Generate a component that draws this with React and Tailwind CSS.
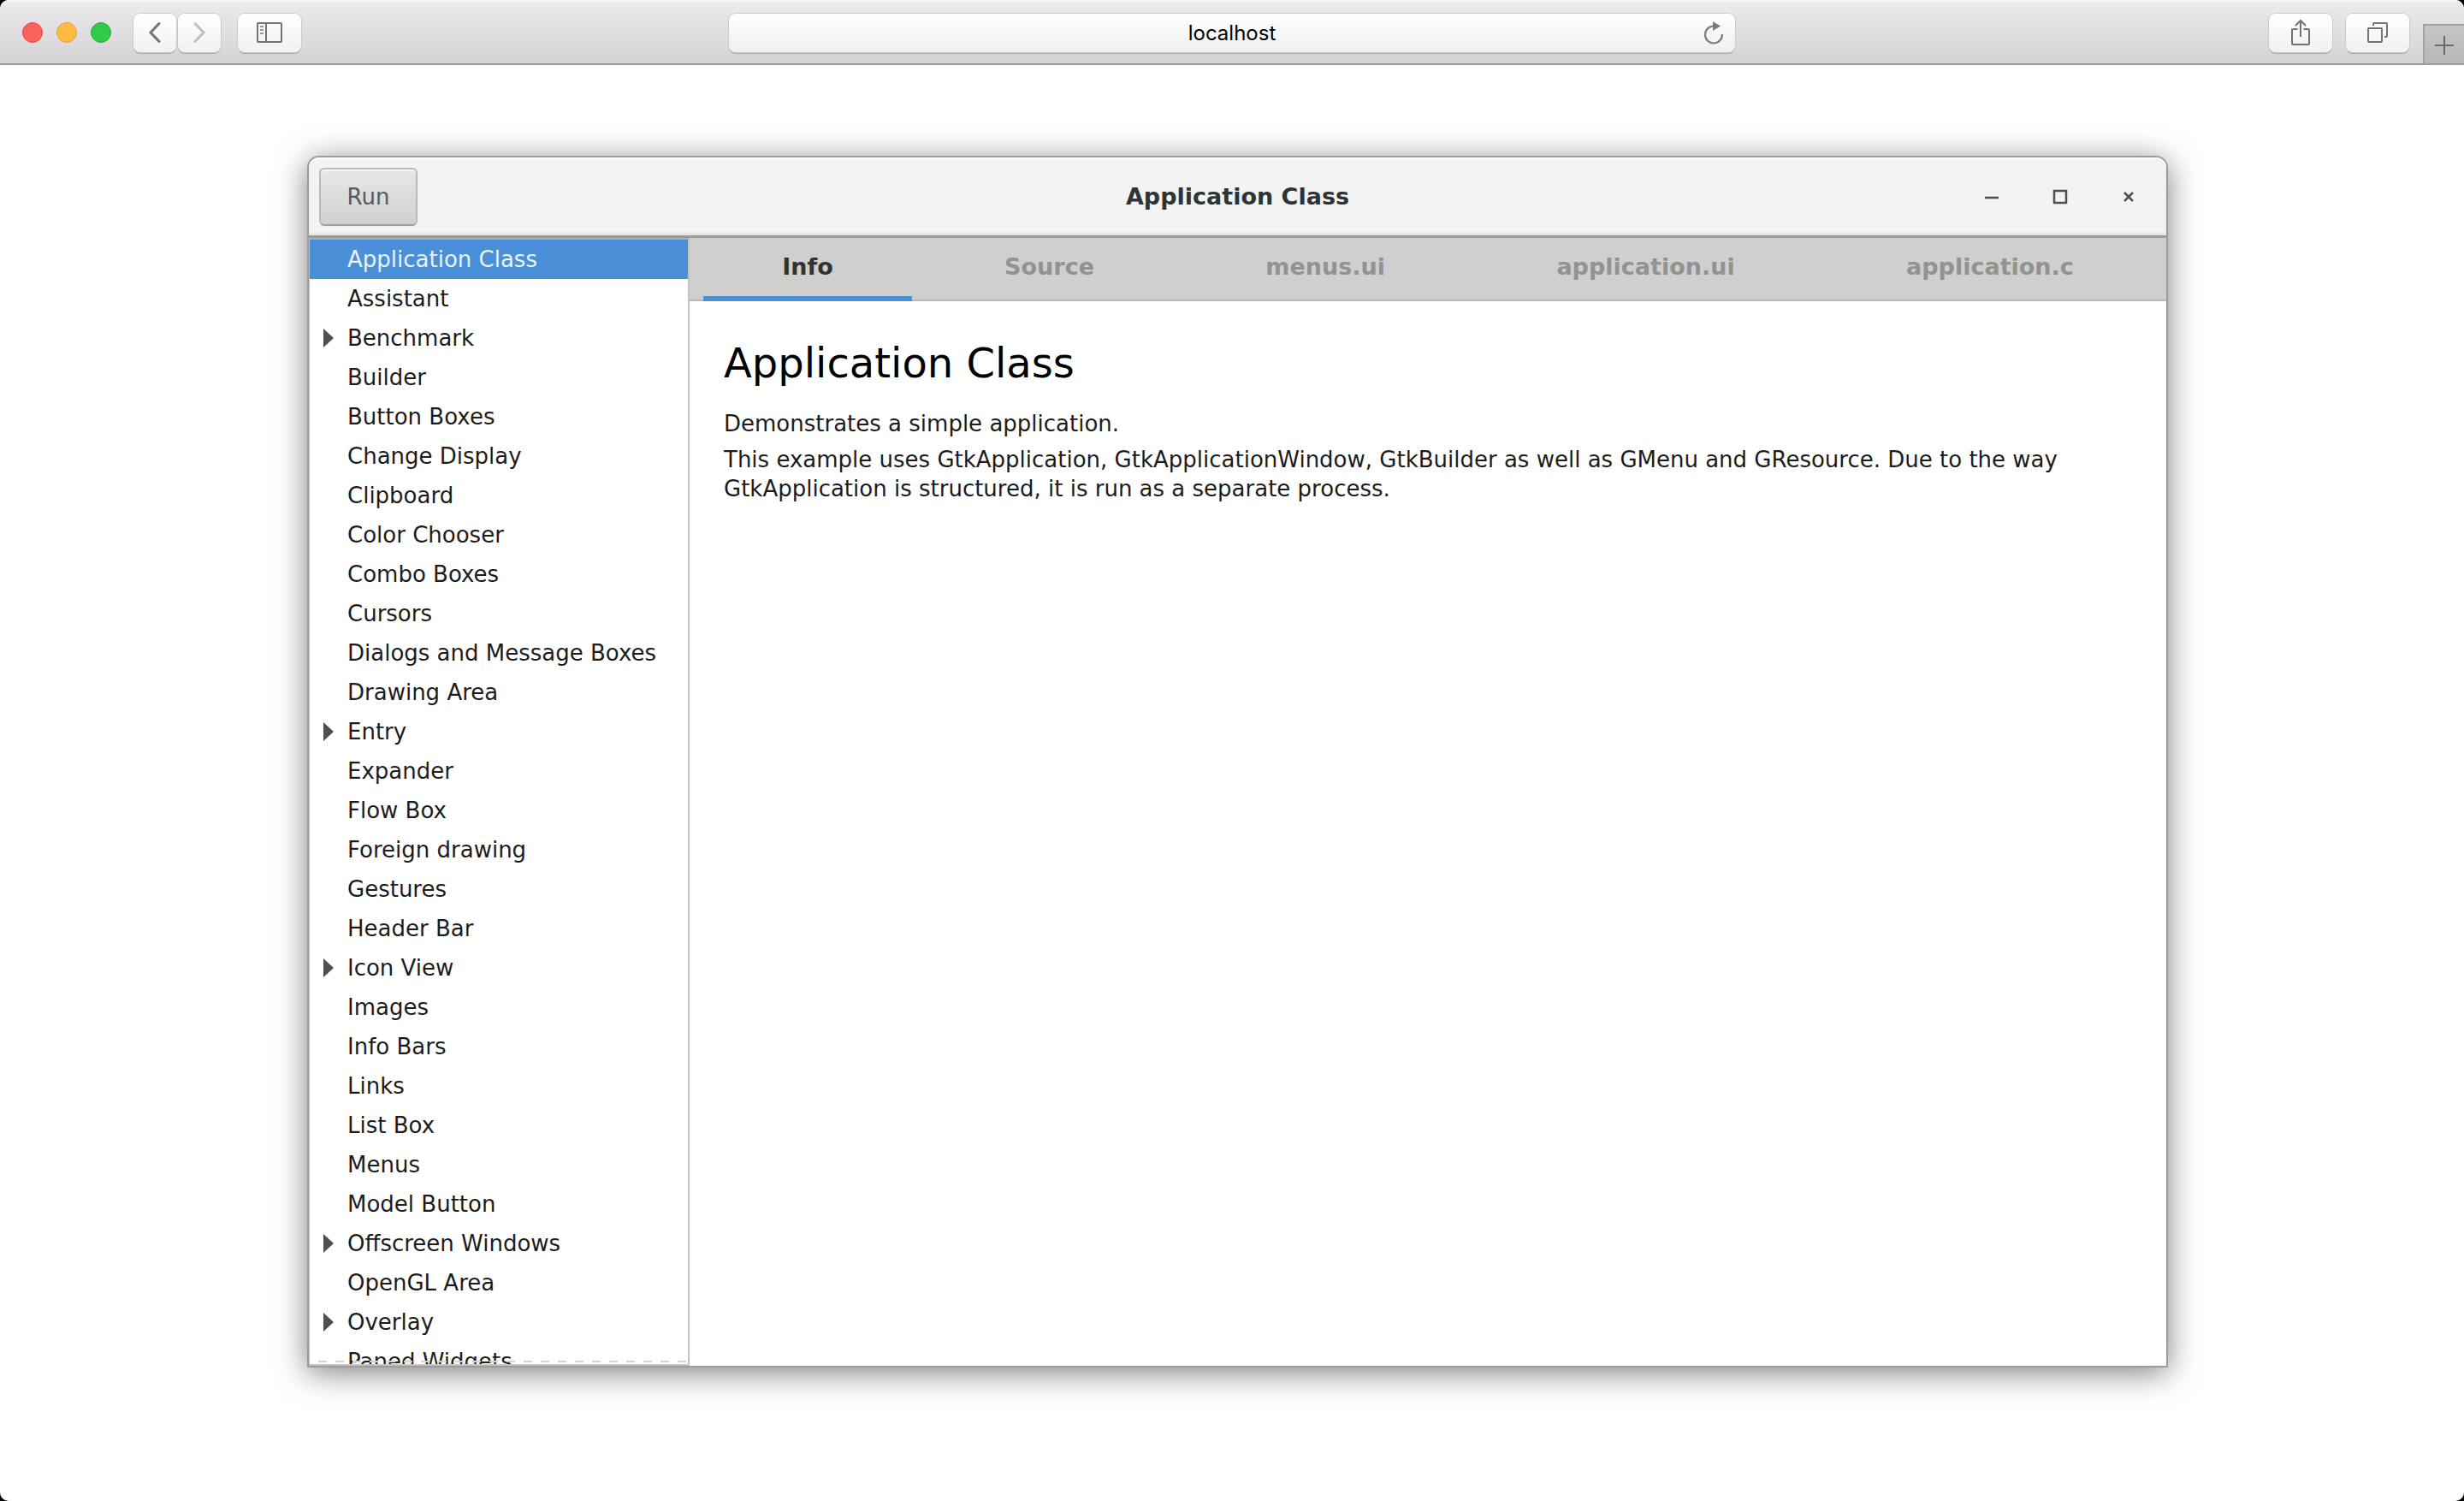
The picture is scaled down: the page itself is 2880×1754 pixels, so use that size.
import React, { useState } from "react";

const demos = [
  { name: "Application Class" },
  { name: "Assistant" },
  { name: "Benchmark", nested: true },
  { name: "Builder" },
  { name: "Button Boxes" },
  { name: "Change Display" },
  { name: "Clipboard" },
  { name: "Color Chooser" },
  { name: "Combo Boxes" },
  { name: "Cursors" },
  { name: "Dialogs and Message Boxes" },
  { name: "Drawing Area" },
  { name: "Entry", nested: true },
  { name: "Expander" },
  { name: "Flow Box" },
  { name: "Foreign drawing" },
  { name: "Gestures" },
  { name: "Header Bar" },
  { name: "Icon View", nested: true },
  { name: "Images" },
  { name: "Info Bars" },
  { name: "Links" },
  { name: "List Box" },
  { name: "Menus" },
  { name: "Model Button" },
  { name: "Offscreen Windows", nested: true },
  { name: "OpenGL Area" },
  { name: "Overlay", nested: true },
  { name: "Paned Widgets" },
];

const tabs = ["Info", "Source", "menus.ui", "application.ui", "application.c"];

const chromeButton =
  "flex h-[45px] items-center justify-center rounded-lg bg-linear-to-b from-white to-[#f1f1f1] text-[#737373] shadow-[0_0_0_1px_#cbc9cc,0_2px_0_0_#a9a8aa]";

function BrowserBar() {
  return (
    <header className="grid h-[76px] shrink-0 grid-cols-[1fr_41%_1fr] rounded-t-[10px] border-b-2 border-[#9d9b9e] bg-linear-to-b from-[#eeebef] to-[#d4d2d5] pt-[2px] shadow-[inset_0_2px_0_#f7f5f8]">
      <div className="flex items-center pl-[26px]">
        <div className="flex gap-4">
          <button aria-label="Close browser" className="size-6 rounded-full border border-[#e2443f] bg-[#fc615d]" />
          <button aria-label="Minimize browser" className="size-6 rounded-full border border-[#dfa033] bg-[#fdbc40]" />
          <button aria-label="Zoom browser" className="size-6 rounded-full border border-[#27aa35] bg-[#34ca49]" />
        </div>
        <div className="ml-[26px] flex gap-[2px]">
          <button aria-label="Back" className={`${chromeButton} w-[50px]`}>
            <svg width="16" height="26" viewBox="0 0 16 26" fill="none" stroke="#737373" strokeWidth="3" strokeLinecap="round">
              <path d="M13 2.500L3 13l10 10.500" />
            </svg>
          </button>
          <button aria-label="Forward" className={`${chromeButton} w-[50px]`}>
            <svg width="16" height="26" viewBox="0 0 16 26" fill="none" stroke="#bfbfbf" strokeWidth="3" strokeLinecap="round">
              <path d="M3 2.500L13 13L3 23.500" />
            </svg>
          </button>
        </div>
        <button aria-label="Show sidebar" className={`${chromeButton} ml-5 w-[74px]`}>
          <svg width="30" height="24" viewBox="0 0 30 24" fill="none" stroke="currentColor" strokeWidth="2">
            <rect x="1" y="1" width="28" height="22" rx="1" />
            <path d="M11 1v22" />
            <path d="M4 5h4M4 9h4M4 13h4" strokeWidth="1.500" />
          </svg>
        </button>
      </div>

      <div className="mx-[2px] my-auto flex h-[45px] items-center rounded-lg bg-linear-to-b from-white to-[#efefef] shadow-[0_0_0_1px_#cbc9cc,0_2px_0_0_#a9a8aa]">
        <input
          aria-label="Address"
          defaultValue="localhost"
          className="min-w-0 flex-1 bg-transparent pt-[2px] pl-12 text-center font-['Inter','Liberation_Sans',sans-serif] text-2xl text-black outline-none"
        />
        <button aria-label="Reload" className="flex w-12 justify-center pr-[2px]">
          <svg width="24" height="28" viewBox="0 0 24 28">
            <path d="M12 6.500A10 10 0 1 0 22 16" fill="none" stroke="#7b7b7b" strokeWidth="2.200" />
            <path d="M11 1l9 5.500L11 12z" fill="#7b7b7b" />
          </svg>
        </button>
      </div>

      <div className="flex items-center justify-end">
        <button aria-label="Share" className={`${chromeButton} w-[74px]`}>
          <svg width="24" height="32" viewBox="0 0 24 32" fill="none" stroke="currentColor" strokeWidth="2">
            <path d="M8.500 12H3a1 1 0 0 0-1 1v16a1 1 0 0 0 1 1h18a1 1 0 0 0 1-1V13a1 1 0 0 0-1-1h-5.500" />
            <path d="M12 21V2M6 8l6-6 6 6" />
          </svg>
        </button>
        <button aria-label="Tab overview" className={`${chromeButton} ml-4 w-[74px]`}>
          <svg width="26" height="26" viewBox="0 0 26 26" fill="none" stroke="currentColor" strokeWidth="2">
            <rect x="2" y="8" width="16" height="16" rx="1" />
            <path d="M8 5V3a1 1 0 0 1 1-1h14a1 1 0 0 1 1 1v14a1 1 0 0 1-1 1h-2" />
          </svg>
        </button>
        <button
          aria-label="New tab"
          className="ml-4 flex h-[46px] w-12 items-center justify-center self-end border-t-2 border-l-2 border-[#a4a2a5] bg-linear-to-b from-[#c6c4c7] to-[#b8b6b9] pt-[2px]"
        >
          <svg width="24" height="24" viewBox="0 0 24 24" stroke="#6b6b6b" strokeWidth="2">
            <path d="M1 12h22M12 1v22" />
          </svg>
        </button>
      </div>
    </header>
  );
}

function TitleBar() {
  return (
    <div className="grid h-[94px] shrink-0 grid-cols-[1fr_auto_1fr] items-center rounded-t-xl border-b-[3px] border-[#9c9d99] bg-[#f3f3f3] px-1 shadow-[inset_0_2px_0_#ffffff,inset_0_-3px_2px_#e6e6e5]">
      <button className="ml-2 h-[68px] w-[115px] justify-self-start rounded-md border-2 border-[#b9b9b6] border-b-[#a0a09d] bg-linear-to-b from-[#e8e8e7] to-[#d0d0ce] text-[#555b5c] shadow-[inset_0_2px_0_#f6f6f6]">
        Run
      </button>
      <h1 className="text-[27px] font-bold text-[#2e3436]">Application Class</h1>
      <div className="flex justify-end text-[#4b5152]">
        <button aria-label="Minimize" className="flex h-16 w-20 items-center justify-center">
          <svg width="18" height="18" viewBox="0 0 18 18" stroke="currentColor" strokeWidth="2.500">
            <path d="M1 10h16" />
          </svg>
        </button>
        <button aria-label="Maximize" className="flex h-16 w-20 items-center justify-center">
          <svg width="18" height="18" viewBox="0 0 18 18" fill="none" stroke="currentColor" strokeWidth="2.500">
            <rect x="2" y="2" width="14" height="14" />
          </svg>
        </button>
        <button aria-label="Close" className="flex h-16 w-20 items-center justify-center">
          <svg width="18" height="18" viewBox="0 0 18 18" stroke="currentColor" strokeWidth="2.500">
            <path d="M4 4l10 10M14 4L4 14" />
          </svg>
        </button>
      </div>
    </div>
  );
}

function DemoList({ selected, onSelect }) {
  return (
    <nav aria-label="Demos" className="relative w-[445px] shrink-0 overflow-hidden border-t-2 border-r-2 border-b-2 border-l border-[#c3c3c0] border-t-[#adada9] bg-white">
      <ul>
        {demos.map((demo) => (
          <li key={demo.name}>
            <button
              onClick={() => onSelect(demo.name)}
              className={
                demo.name === selected
                  ? "flex h-[46px] w-full items-center bg-[#4a90d9] text-left text-[#eaf2fb]"
                  : "flex h-[46px] w-full items-center text-left text-[#1c1c1c]"
              }
            >
              <span className="flex w-11 justify-center">
                {demo.nested && (
                  <svg width="12" height="22" viewBox="0 0 12 22" fill="#4f4f4f">
                    <path d="M0 0l12 11L0 22z" />
                  </svg>
                )}
              </span>
              {demo.name}
            </button>
          </li>
        ))}
      </ul>
      <div className="absolute inset-x-0 bottom-[2px] h-[2px] bg-[repeating-linear-gradient(90deg,transparent_0_10px,#d3d3d3_10px_20px)]" />
    </nav>
  );
}

export default function App() {
  const [selected, setSelected] = useState("Application Class");
  const [tab, setTab] = useState("Info");

  return (
    <div className="h-screen bg-black">
      <div className="flex h-full flex-col overflow-hidden rounded-[10px] bg-white">
        <BrowserBar />
        <main className="flex min-h-0 flex-1 flex-col pt-[108px] pr-[348px] pb-[158px] pl-[361px] font-['DejaVu_Sans',sans-serif] text-[26px] leading-[34px]">
          <section className="flex min-h-0 flex-1 flex-col rounded-t-xl bg-white shadow-[0_0_0_2px_#9b9b9b,0_6px_36px_2px_rgba(0,0,0,0.5)]">
            <TitleBar />
            <div className="flex min-h-0 flex-1 bg-white">
              <DemoList selected={selected} onSelect={setSelected} />
              <div className="flex min-w-0 flex-1 flex-col">
                <div role="tablist" className="flex h-[74px] shrink-0 gap-4 border-b-2 border-[#b9b9b6] bg-[#cfcfcd] px-4 text-[27px]">
                  {tabs.map((name) => (
                    <button
                      key={name}
                      role="tab"
                      aria-selected={name === tab}
                      onClick={() => setTab(name)}
                      className={
                        name === tab
                          ? "-mb-[2px] flex-auto border-b-[6px] border-[#4a90d9] font-bold text-[#2e3436]"
                          : "-mb-[2px] flex-auto border-b-[6px] border-transparent font-bold text-[#8f9393]"
                      }
                    >
                      {name}
                    </button>
                  ))}
                </div>
                <article role="tabpanel" className="px-10 pt-11 text-[#1c1c1c]">
                  <h2 className="text-5xl leading-[56px] text-black">Application Class</h2>
                  <p className="mt-[26px]">Demonstrates a simple application.</p>
                  <p className="mt-2">
                    This example uses GtkApplication, GtkApplicationWindow, GtkBuilder as well as GMenu and GResource. Due to the way GtkApplication is structured, it is run as a separate process.
                  </p>
                </article>
              </div>
            </div>
          </section>
        </main>
      </div>
    </div>
  );
}
